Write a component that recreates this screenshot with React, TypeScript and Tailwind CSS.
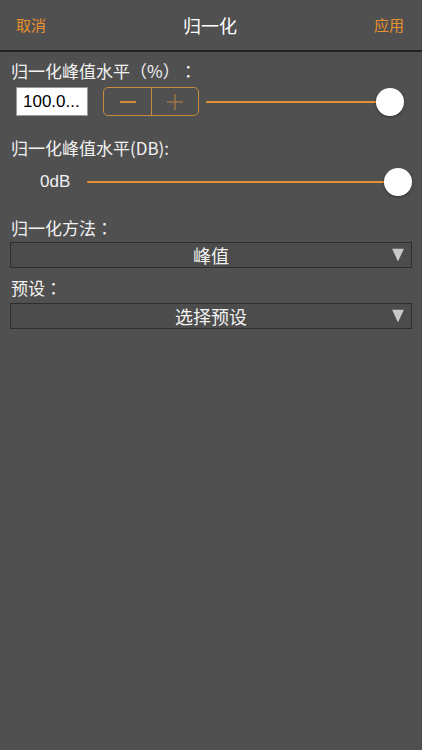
import React from "react";

const font = { fontFamily: '"Noto Sans CJK SC", "Noto Sans", sans-serif' };

function P({ children }: { children: React.ReactNode }) {
  return <span className="[font-family:'Noto_Sans_CJK_TC',sans-serif]">{children}</span>;
}

function Slider() {
  return (
    <div className="relative flex-1 h-[30px] flex items-center">
      <div className="h-[2px] w-full bg-[#e8912f] rounded-full" />
      <div className="absolute right-0 top-1/2 -translate-y-1/2 w-[28px] h-[28px] rounded-full bg-white shadow-[0_1px_3px_rgba(0,0,0,0.35)]" />
    </div>
  );
}

function Dropdown({ text }: { text: string }) {
  return (
    <div className="mx-[10px] h-[26px] border-[1.5px] border-[#2e2e2e] bg-[#4c4c4c] relative flex items-center justify-center">
      <span className="text-[18px] leading-none text-[#f2f2f2]">{text}</span>
      <svg className="absolute right-[7px] top-1/2 -translate-y-1/2" width="12" height="13" viewBox="0 0 12 13">
        <polygon points="0,0 12,0 6,13" fill="#c9c9c9" />
      </svg>
    </div>
  );
}

export default function App() {
  return (
    <div className="w-[422px] h-[750px] bg-[#505050] overflow-hidden [text-spacing-trim:space-all]" style={font}>
      <div className="h-[52px] flex items-center justify-between pl-[16px] pr-[18px] border-b-2 border-[#232323]">
        <span className="text-[15px] text-[#e8912f]">取消</span>
        <span className="text-[18px] text-white">归一化</span>
        <span className="text-[15px] text-[#e8912f]">应用</span>
      </div>

      <div className="mt-[8px] pl-[11px] text-[17px] leading-[22px] text-[#f2f2f2]">
        归一化峰值水平<P>（%）：</P>
      </div>
      <div className="mt-[5px] flex items-center pl-[16px] pr-[18px] h-[29px]">
        <div className="w-[72px] h-[29px] bg-white border border-[#9a9a9a] flex items-center pl-[6px]">
          <span className="text-[17px] text-black leading-none [font-family:'Liberation_Sans',sans-serif]">100.0...</span>
        </div>
        <div className="ml-[15px] w-[96px] h-[29px] border border-[#c88a3c] rounded-[5px] flex">
          <div className="w-[48px] h-full flex items-center justify-center border-r border-[#c88a3c]">
            <svg width="16" height="2" viewBox="0 0 16 2">
              <rect width="16" height="2" fill="#d18d3c" />
            </svg>
          </div>
          <div className="flex-1 h-full flex items-center justify-center">
            <svg width="16" height="16" viewBox="0 0 16 16">
              <rect x="0" y="7.25" width="16" height="1.5" fill="#9c7445" />
              <rect x="7.25" y="0" width="1.5" height="16" fill="#9c7445" />
            </svg>
          </div>
        </div>
        <div className="ml-[7px] flex-1 flex">
          <Slider />
        </div>
      </div>

      <div className="mt-[21px] pl-[11px] text-[17px] leading-[22px] text-[#f2f2f2]">归一化峰值水平(DB):</div>
      <div className="mt-[8px] flex items-center pl-[40px] pr-[10px] h-[30px]">
        <span className="text-[17px] text-[#f2f2f2] w-[47px] [font-family:'Liberation_Sans',sans-serif]">0dB</span>
        <Slider />
      </div>

      <div className="mt-[20px] pl-[11px] text-[17px] leading-[22px] text-[#f2f2f2]">
        归一化方法<P>：</P>
      </div>
      <div className="mt-[3px]">
        <Dropdown text="峰值" />
      </div>

      <div className="mt-[9px] pl-[11px] text-[17px] leading-[22px] text-[#f2f2f2]">
        预设<P>：</P>
      </div>
      <div className="mt-[4px]">
        <Dropdown text="选择预设" />
      </div>
    </div>
  );
}
